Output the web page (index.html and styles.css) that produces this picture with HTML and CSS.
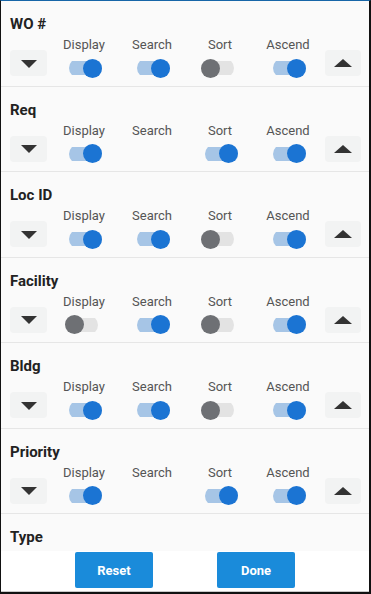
FILE: index.html
```html
<!DOCTYPE html>
<html>
<head>
<meta charset="utf-8">
<link rel="stylesheet" href="styles.css">
</head>
<body>
<div class="window">
  <div class="list">
    <div class="field">
      <div class="title">WO #</div>
      <div class="row">
        <div class="arrow-btn"><span class="tri-down"></span></div>
        <div class="col"><div class="label">Display</div><div class="switch on"><span class="thumb"></span></div></div>
        <div class="col"><div class="label">Search</div><div class="switch on"><span class="thumb"></span></div></div>
        <div class="col"><div class="label">Sort</div><div class="switch"><span class="thumb"></span></div></div>
        <div class="col"><div class="label">Ascend</div><div class="switch on"><span class="thumb"></span></div></div>
        <div class="arrow-btn right"><span class="tri-up"></span></div>
      </div>
    </div>
    <div class="field">
      <div class="title">Req</div>
      <div class="row">
        <div class="arrow-btn"><span class="tri-down"></span></div>
        <div class="col"><div class="label">Display</div><div class="switch on"><span class="thumb"></span></div></div>
        <div class="col"><div class="label">Search</div></div>
        <div class="col"><div class="label">Sort</div><div class="switch on"><span class="thumb"></span></div></div>
        <div class="col"><div class="label">Ascend</div><div class="switch on"><span class="thumb"></span></div></div>
        <div class="arrow-btn right"><span class="tri-up"></span></div>
      </div>
    </div>
    <div class="field">
      <div class="title">Loc ID</div>
      <div class="row">
        <div class="arrow-btn"><span class="tri-down"></span></div>
        <div class="col"><div class="label">Display</div><div class="switch on"><span class="thumb"></span></div></div>
        <div class="col"><div class="label">Search</div><div class="switch on"><span class="thumb"></span></div></div>
        <div class="col"><div class="label">Sort</div><div class="switch"><span class="thumb"></span></div></div>
        <div class="col"><div class="label">Ascend</div><div class="switch on"><span class="thumb"></span></div></div>
        <div class="arrow-btn right"><span class="tri-up"></span></div>
      </div>
    </div>
    <div class="field">
      <div class="title">Facility</div>
      <div class="row">
        <div class="arrow-btn"><span class="tri-down"></span></div>
        <div class="col"><div class="label">Display</div><div class="switch"><span class="thumb"></span></div></div>
        <div class="col"><div class="label">Search</div><div class="switch on"><span class="thumb"></span></div></div>
        <div class="col"><div class="label">Sort</div><div class="switch"><span class="thumb"></span></div></div>
        <div class="col"><div class="label">Ascend</div><div class="switch on"><span class="thumb"></span></div></div>
        <div class="arrow-btn right"><span class="tri-up"></span></div>
      </div>
    </div>
    <div class="field">
      <div class="title">Bldg</div>
      <div class="row">
        <div class="arrow-btn"><span class="tri-down"></span></div>
        <div class="col"><div class="label">Display</div><div class="switch on"><span class="thumb"></span></div></div>
        <div class="col"><div class="label">Search</div><div class="switch on"><span class="thumb"></span></div></div>
        <div class="col"><div class="label">Sort</div><div class="switch"><span class="thumb"></span></div></div>
        <div class="col"><div class="label">Ascend</div><div class="switch on"><span class="thumb"></span></div></div>
        <div class="arrow-btn right"><span class="tri-up"></span></div>
      </div>
    </div>
    <div class="field">
      <div class="title">Priority</div>
      <div class="row">
        <div class="arrow-btn"><span class="tri-down"></span></div>
        <div class="col"><div class="label">Display</div><div class="switch on"><span class="thumb"></span></div></div>
        <div class="col"><div class="label">Search</div></div>
        <div class="col"><div class="label">Sort</div><div class="switch on"><span class="thumb"></span></div></div>
        <div class="col"><div class="label">Ascend</div><div class="switch on"><span class="thumb"></span></div></div>
        <div class="arrow-btn right"><span class="tri-up"></span></div>
      </div>
    </div>
    <div class="field">
      <div class="title">Type</div>
    </div>
  </div>
  <div class="footer">
    <button class="btn">Reset</button>
    <button class="btn">Done</button>
  </div>
</div>
</body>
</html>
```

FILE: styles.css
```css
* { box-sizing: border-box; }
html, body { margin: 0; padding: 0; }
body {
  font-family: Roboto, "Liberation Sans", sans-serif;
  background: #fff;
}
.window {
  width: 371px;
  height: 594px;
  border-top: 1px solid #1766a8;
  border-left: 1px solid #111;
  border-right: 2px solid #111;
  border-bottom: 2px solid #111;
  display: flex;
  flex-direction: column;
}
.list {
  height: 550px;
  overflow: hidden;
  background: #fafafa;
  flex: none;
}
.field {
  height: 85.5px;
  padding-top: 14px;
  border-bottom: 1px solid #e6e6e6;
}
.title {
  font-size: 15px;
  font-weight: 700;
  line-height: 18px;
  color: #222;
  padding-left: 9px;
}
.row {
  margin-top: 4px;
  padding-left: 9px;
  display: grid;
  grid-template-columns: 40px repeat(4, 68px) 39px;
  align-items: end;
}
.col {
  display: flex;
  flex-direction: column;
  align-items: center;
  height: 41px;
}
.label {
  font-size: 13px;
  line-height: 16px;
  color: #555;
}
.arrow-btn {
  width: 37px;
  height: 26px;
  background: #f2f3f3;
  border-radius: 4px;
  display: flex;
  align-items: center;
  justify-content: center;
  margin-bottom: 2px;
  justify-self: start;
}
.arrow-btn.right {
  width: 36px;
  justify-self: end;
}
.tri-down {
  width: 0; height: 0;
  border-left: 8px solid transparent;
  border-right: 8px solid transparent;
  border-top: 8px solid #333;
  margin-top: 1px;
}
.tri-up {
  width: 0; height: 0;
  border-left: 9px solid transparent;
  border-right: 9px solid transparent;
  border-bottom: 8px solid #333;
}
.switch {
  margin-top: 5px;
  margin-right: 6px;
  width: 33px;
  height: 20px;
  display: flex;
  align-items: center;
  background: linear-gradient(#e3e3e3, #e3e3e3) center / 100% 14px no-repeat;
  border-radius: 10px;
}
.switch .thumb {
  width: 19px;
  height: 19px;
  border-radius: 50%;
  background: #6e7074;
}
.switch.on {
  justify-content: flex-end;
  background: linear-gradient(#a6c5e6, #a6c5e6) center / 100% 14px no-repeat;
  margin-right: 0;
  margin-left: 2px;
}
.switch.on .thumb {
  background: #1b74d3;
}
.footer {
  flex: 1;
  background: #fff;
  display: flex;
  justify-content: center;
  gap: 64px;
  padding-top: 1px;
  border-bottom: 1px solid #c8c8c8;
}
.btn {
  width: 78px;
  height: 36px;
  border: none;
  border-radius: 2px;
  background: #1a8bda;
  color: #fff;
  font-family: Roboto, "Liberation Sans", sans-serif;
  font-weight: 700;
  font-size: 13px;
  padding: 0;
}
```
